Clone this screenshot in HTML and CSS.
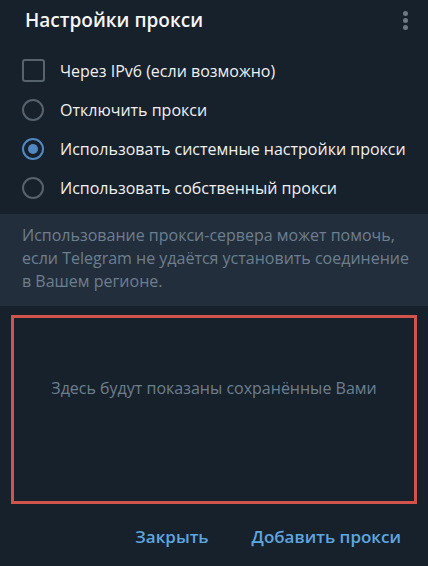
FILE: index.html
```html
<!DOCTYPE html>
<html lang="ru">
<head>
<meta charset="utf-8">
<link rel="stylesheet" href="styles.css">
</head>
<body>
<div class="box">
  <header class="head">
    <h1 class="title">Настройки прокси</h1>
    <div class="menu"><span></span><span></span><span></span></div>
  </header>
  <div class="opts">
    <div class="row"><span class="ic"><span class="check"></span></span><span class="lbl">Через IPv6 (если возможно)</span></div>
    <div class="row"><span class="ic"><span class="radio"></span></span><span class="lbl">Отключить прокси</span></div>
    <div class="row"><span class="ic"><span class="radio on"></span></span><span class="lbl">Использовать системные настройки прокси</span></div>
    <div class="row"><span class="ic"><span class="radio"></span></span><span class="lbl">Использовать собственный прокси</span></div>
  </div>
  <div class="info">Использование прокси-сервера может помочь, если Telegram не удаётся установить соединение в Вашем регионе.</div>
  <div class="list">
    <div class="empty">Здесь будут показаны сохранённые Вами</div>
  </div>
  <div class="btns">
    <span class="btn">Закрыть</span>
    <span class="btn">Добавить прокси</span>
  </div>
</div>
</body>
</html>
```
FILE: styles.css
```css
html, body {
  margin: 0;
  padding: 0;
  background: #17212b;
}
body {
  font-family: "Open Sans", "Noto Sans", sans-serif;
  color: #f5f5f5;
  width: 428px;
  height: 566px;
  overflow: hidden;
}
.box {
  display: flex;
  flex-direction: column;
}
.head {
  display: flex;
  align-items: center;
  justify-content: space-between;
  height: 40px;
  padding: 0 20px 0 25px;
}
.title {
  margin: 0;
  font-size: 19px;
  font-weight: 600;
  color: #f5f5f5;
}
.menu {
  display: flex;
  flex-direction: column;
  gap: 2px;
  margin-top: 1px;
}
.menu span {
  width: 5px;
  height: 5px;
  border-radius: 50%;
  background: #6d7883;
}
.opts {
  display: flex;
  flex-direction: column;
  padding: 11px 0 0 22px;
}
.row {
  display: flex;
  align-items: center;
  height: 39px;
  gap: 15px;
}
.ic {
  width: 23px;
  display: flex;
  align-items: center;
}
.lbl {
  font-size: 16px;
  color: #f0f0f0;
}
.check {
  box-sizing: border-box;
  width: 23px;
  height: 23px;
  border: 2px solid #56626e;
  border-radius: 3px;
}
.radio {
  box-sizing: border-box;
  width: 22px;
  height: 22px;
  border: 2px solid #56626e;
  border-radius: 50%;
  display: flex;
  align-items: center;
  justify-content: center;
}
.radio.on {
  border-color: #5288c1;
}
.radio.on::after {
  content: "";
  width: 10px;
  height: 10px;
  border-radius: 50%;
  background: #5288c1;
}
.info {
  margin-top: 7px;
  background: #232e3c;
  padding: 10px 8px 13px 22px;
  font-size: 16px;
  line-height: 23px;
  color: #6d7f8f;
}
.list {
  margin: 9px 11px 0 11px;
  height: 189px;
  box-sizing: border-box;
  border: 3px solid #d0544b;
  display: flex;
  justify-content: center;
  padding-top: 59px;
}
.empty {
  font-size: 16px;
  color: #6d7f8f;
}
.btns {
  display: flex;
  justify-content: flex-end;
  gap: 43px;
  padding: 21px 27px 0 0;
}
.btn {
  font-size: 17px;
  font-weight: 600;
  color: #5ea6e0;
}
```
